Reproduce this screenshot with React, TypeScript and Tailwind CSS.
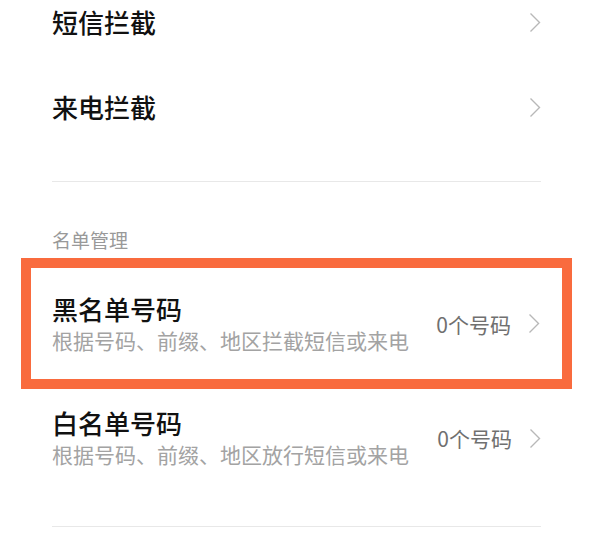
const font = { fontFamily: '"Noto Sans CJK SC", "Noto Sans", sans-serif' };

function Arrow() {
  return (
    <svg width="12" height="21" viewBox="0 0 12 21" fill="none" className="shrink-0">
      <polyline points="1.5,1.5 10.5,10.5 1.5,19.5" stroke="#b8b8b8" strokeWidth="1.4" strokeLinejoin="miter" />
    </svg>
  );
}

interface ListRowProps {
  title: string;
  desc: string;
  count: string;
}

function ListRow({ title, desc, count }: ListRowProps) {
  return (
    <div className="flex items-center justify-between h-full">
      <div className="flex flex-col">
        <span className="text-[26px] leading-[32px] font-medium text-[#111]">{title}</span>
        <span className="text-[21px] leading-[30px] text-[#a3a3a3]">{desc}</span>
      </div>
      <div className="flex items-center gap-[17px]">
        <span className="text-[21px] leading-[30px] text-[#707070]">{count}</span>
        <Arrow />
      </div>
    </div>
  );
}

export default function App() {
  return (
    <div className="w-[602px] h-[540px] bg-white overflow-hidden" style={font}>
      {/* Interception entries */}
      <div className="flex items-center justify-between h-[44px] pl-[52px] pr-[61px]">
        <span className="text-[26px] leading-[32px] font-medium text-[#111]">短信拦截</span>
        <Arrow />
      </div>
      <div className="flex items-center justify-between h-[86px] mt-[20px] pl-[52px] pr-[61px]">
        <span className="text-[26px] leading-[32px] font-medium text-[#111]">来电拦截</span>
        <Arrow />
      </div>
      <div className="h-px bg-[#e8e8e8] mt-[31px] ml-[52px] mr-[61px]" />

      {/* List management */}
      <div className="mt-[46px] pl-[52px] text-[19px] leading-[24px] text-[#999]">名单管理</div>

      <div className="mt-[6px] ml-[21px] mr-[30px] h-[131px] border-[10px] border-[#f96b3e] pl-[21px] pr-[22px]">
        <ListRow title="黑名单号码" desc="根据号码、前缀、地区拦截短信或来电" count="0个号码" />
      </div>

      <div className="h-[98px] pl-[52px] pr-[61px]">
        <ListRow title="白名单号码" desc="根据号码、前缀、地区放行短信或来电" count="0个号码" />
      </div>
      <div className="h-px bg-[#e8e8e8] mt-[39px] ml-[52px] mr-[61px]" />
    </div>
  );
}
